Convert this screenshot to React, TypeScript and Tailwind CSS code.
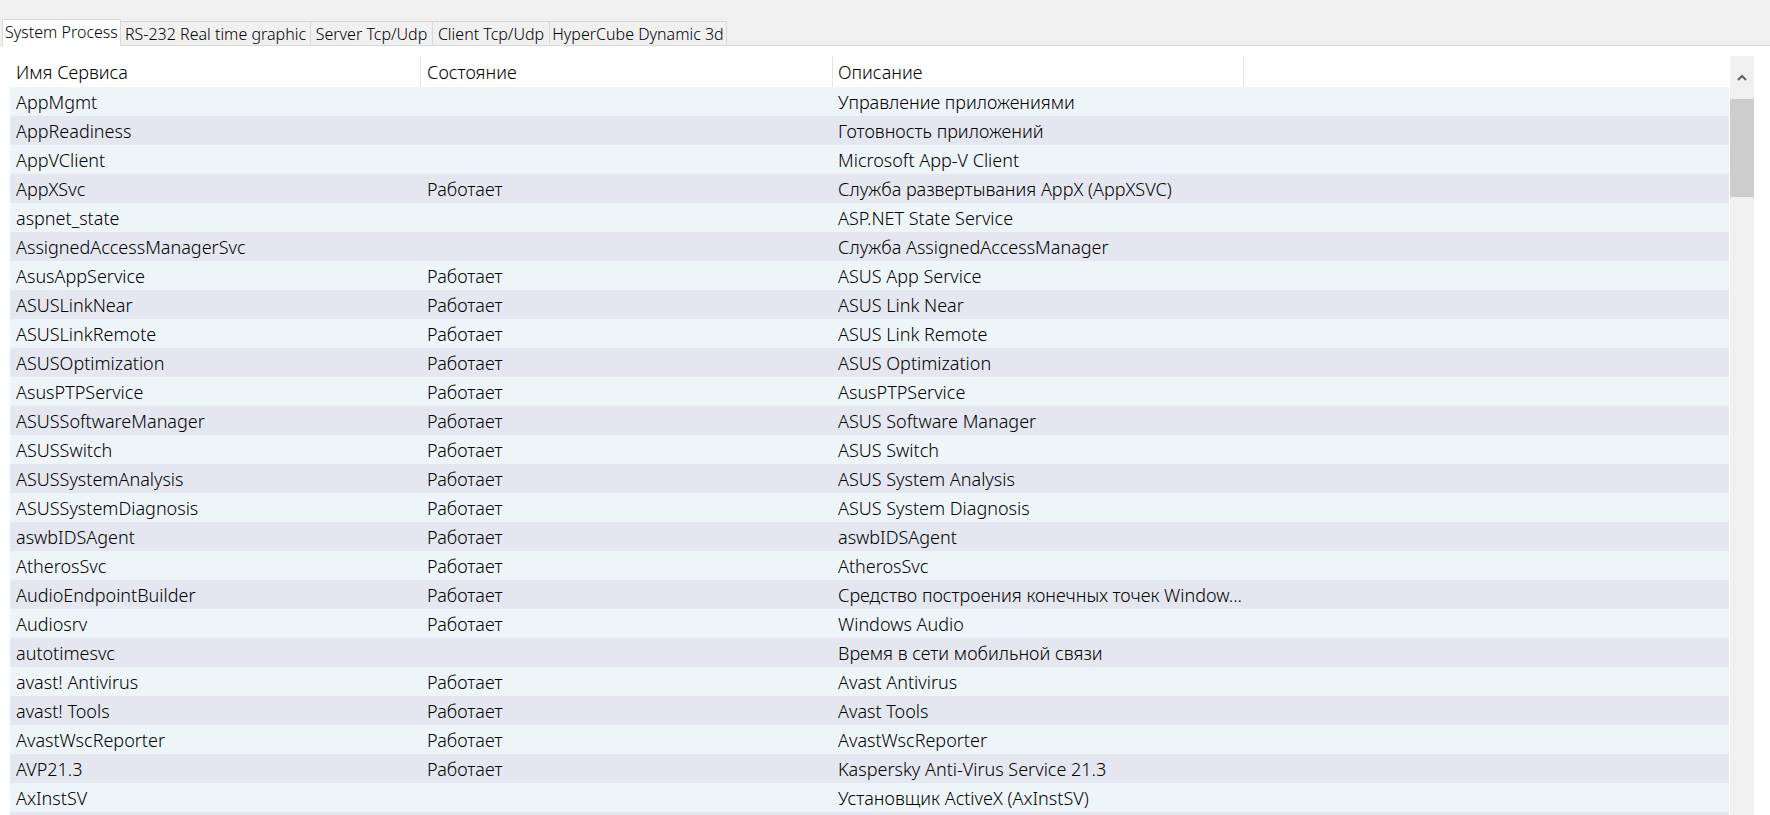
import { clsx } from "clsx";

type Service = {
  name: string;
  state: string;
  description: string;
};

const tabs = [
  { label: "System Process", width: "w-[119px]" },
  { label: "RS-232 Real time graphic", width: "w-[191px]" },
  { label: "Server Tcp/Udp", width: "w-[123px]" },
  { label: "Client Tcp/Udp", width: "w-[118px]" },
  { label: "HyperCube Dynamic 3d", width: "w-[178px]" },
];

const RUN = "Работает";

const services: Service[] = [
  { name: "AppMgmt", state: "", description: "Управление приложениями" },
  { name: "AppReadiness", state: "", description: "Готовность приложений" },
  { name: "AppVClient", state: "", description: "Microsoft App-V Client" },
  { name: "AppXSvc", state: RUN, description: "Служба развертывания AppX (AppXSVC)" },
  { name: "aspnet_state", state: "", description: "ASP.NET State Service" },
  { name: "AssignedAccessManagerSvc", state: "", description: "Служба AssignedAccessManager" },
  { name: "AsusAppService", state: RUN, description: "ASUS App Service" },
  { name: "ASUSLinkNear", state: RUN, description: "ASUS Link Near" },
  { name: "ASUSLinkRemote", state: RUN, description: "ASUS Link Remote" },
  { name: "ASUSOptimization", state: RUN, description: "ASUS Optimization" },
  { name: "AsusPTPService", state: RUN, description: "AsusPTPService" },
  { name: "ASUSSoftwareManager", state: RUN, description: "ASUS Software Manager" },
  { name: "ASUSSwitch", state: RUN, description: "ASUS Switch" },
  { name: "ASUSSystemAnalysis", state: RUN, description: "ASUS System Analysis" },
  { name: "ASUSSystemDiagnosis", state: RUN, description: "ASUS System Diagnosis" },
  { name: "aswbIDSAgent", state: RUN, description: "aswbIDSAgent" },
  { name: "AtherosSvc", state: RUN, description: "AtherosSvc" },
  { name: "AudioEndpointBuilder", state: RUN, description: "Средство построения конечных точек Window..." },
  { name: "Audiosrv", state: RUN, description: "Windows Audio" },
  { name: "autotimesvc", state: "", description: "Время в сети мобильной связи" },
  { name: "avast! Antivirus", state: RUN, description: "Avast Antivirus" },
  { name: "avast! Tools", state: RUN, description: "Avast Tools" },
  { name: "AvastWscReporter", state: RUN, description: "AvastWscReporter" },
  { name: "AVP21.3", state: RUN, description: "Kaspersky Anti-Virus Service 21.3" },
  { name: "AxInstSV", state: "", description: "Установщик ActiveX (AxInstSV)" },
];

function TabBar() {
  return (
    <div className="flex h-[46px] items-end border-b border-[#d9d9d9] bg-[#f0f0f0] pl-[2px]">
      {tabs.map((tab, i) => (
        <div
          key={tab.label}
          className={clsx(
            "flex shrink-0 items-center justify-center whitespace-nowrap border border-[#d9d9d9] text-[16px] text-black",
            tab.width,
            i === 0
              ? "relative z-10 -mb-px h-[27px] border-b-0 bg-white pb-[3px]"
              : "-ml-px h-[24px] border-b-0 bg-[#f0f0f0]"
          )}
        >
          {tab.label}
        </div>
      ))}
    </div>
  );
}

function Scrollbar() {
  return (
    <div className="flex w-[24px] shrink-0 flex-col bg-[#f0f0f0]">
      <div className="flex h-[43px] items-center justify-center">
        <svg width="10" height="7" viewBox="0 0 10 7">
          <polyline points="1,6 5,2 9,6" fill="none" stroke="#606060" strokeWidth="2" />
        </svg>
      </div>
      <div className="h-[98px] bg-[#cdcdcd]" />
    </div>
  );
}

function ServiceTable() {
  return (
    <div className="flex-1 overflow-hidden">
      <div className="grid h-[31px] grid-cols-[411px_412px_411px_1fr] bg-white">
        <div className="flex items-center border-r border-[#e5e5e5] pl-[6px] pt-[2px]">Имя Сервиса</div>
        <div className="flex items-center border-r border-[#e5e5e5] pl-[6px] pt-[2px]">Состояние</div>
        <div className="flex items-center border-r border-[#e5e5e5] pl-[5px] pt-[2px]">Описание</div>
        <div />
      </div>
      {services.map((s, i) => (
        <div
          key={s.name}
          className={clsx(
            "grid h-[29px] grid-cols-[411px_412px_411px_1fr] items-center pt-[2px]",
            i % 2 === 0 ? "bg-[#eef5f8]" : "bg-[#e4e7ef]"
          )}
        >
          <div className="truncate pl-[6px]">{s.name}</div>
          <div className="truncate pl-[6px]">{s.state}</div>
          <div className="truncate pl-[5px]">{s.description}</div>
          <div />
        </div>
      ))}
      {/* next row only peeks in at the bottom edge */}
      <div className="h-[29px] bg-[#e4e7ef]" />
    </div>
  );
}

export default function App() {
  return (
    <div className="flex h-[815px] w-full flex-col overflow-hidden bg-white font-['Noto_Sans',sans-serif] text-[18px] font-light text-black">
      <TabBar />
      <div className="flex min-h-0 flex-1 gap-px pl-[10px] pr-[16px] pt-[10px]">
        <ServiceTable />
        <Scrollbar />
      </div>
    </div>
  );
}
